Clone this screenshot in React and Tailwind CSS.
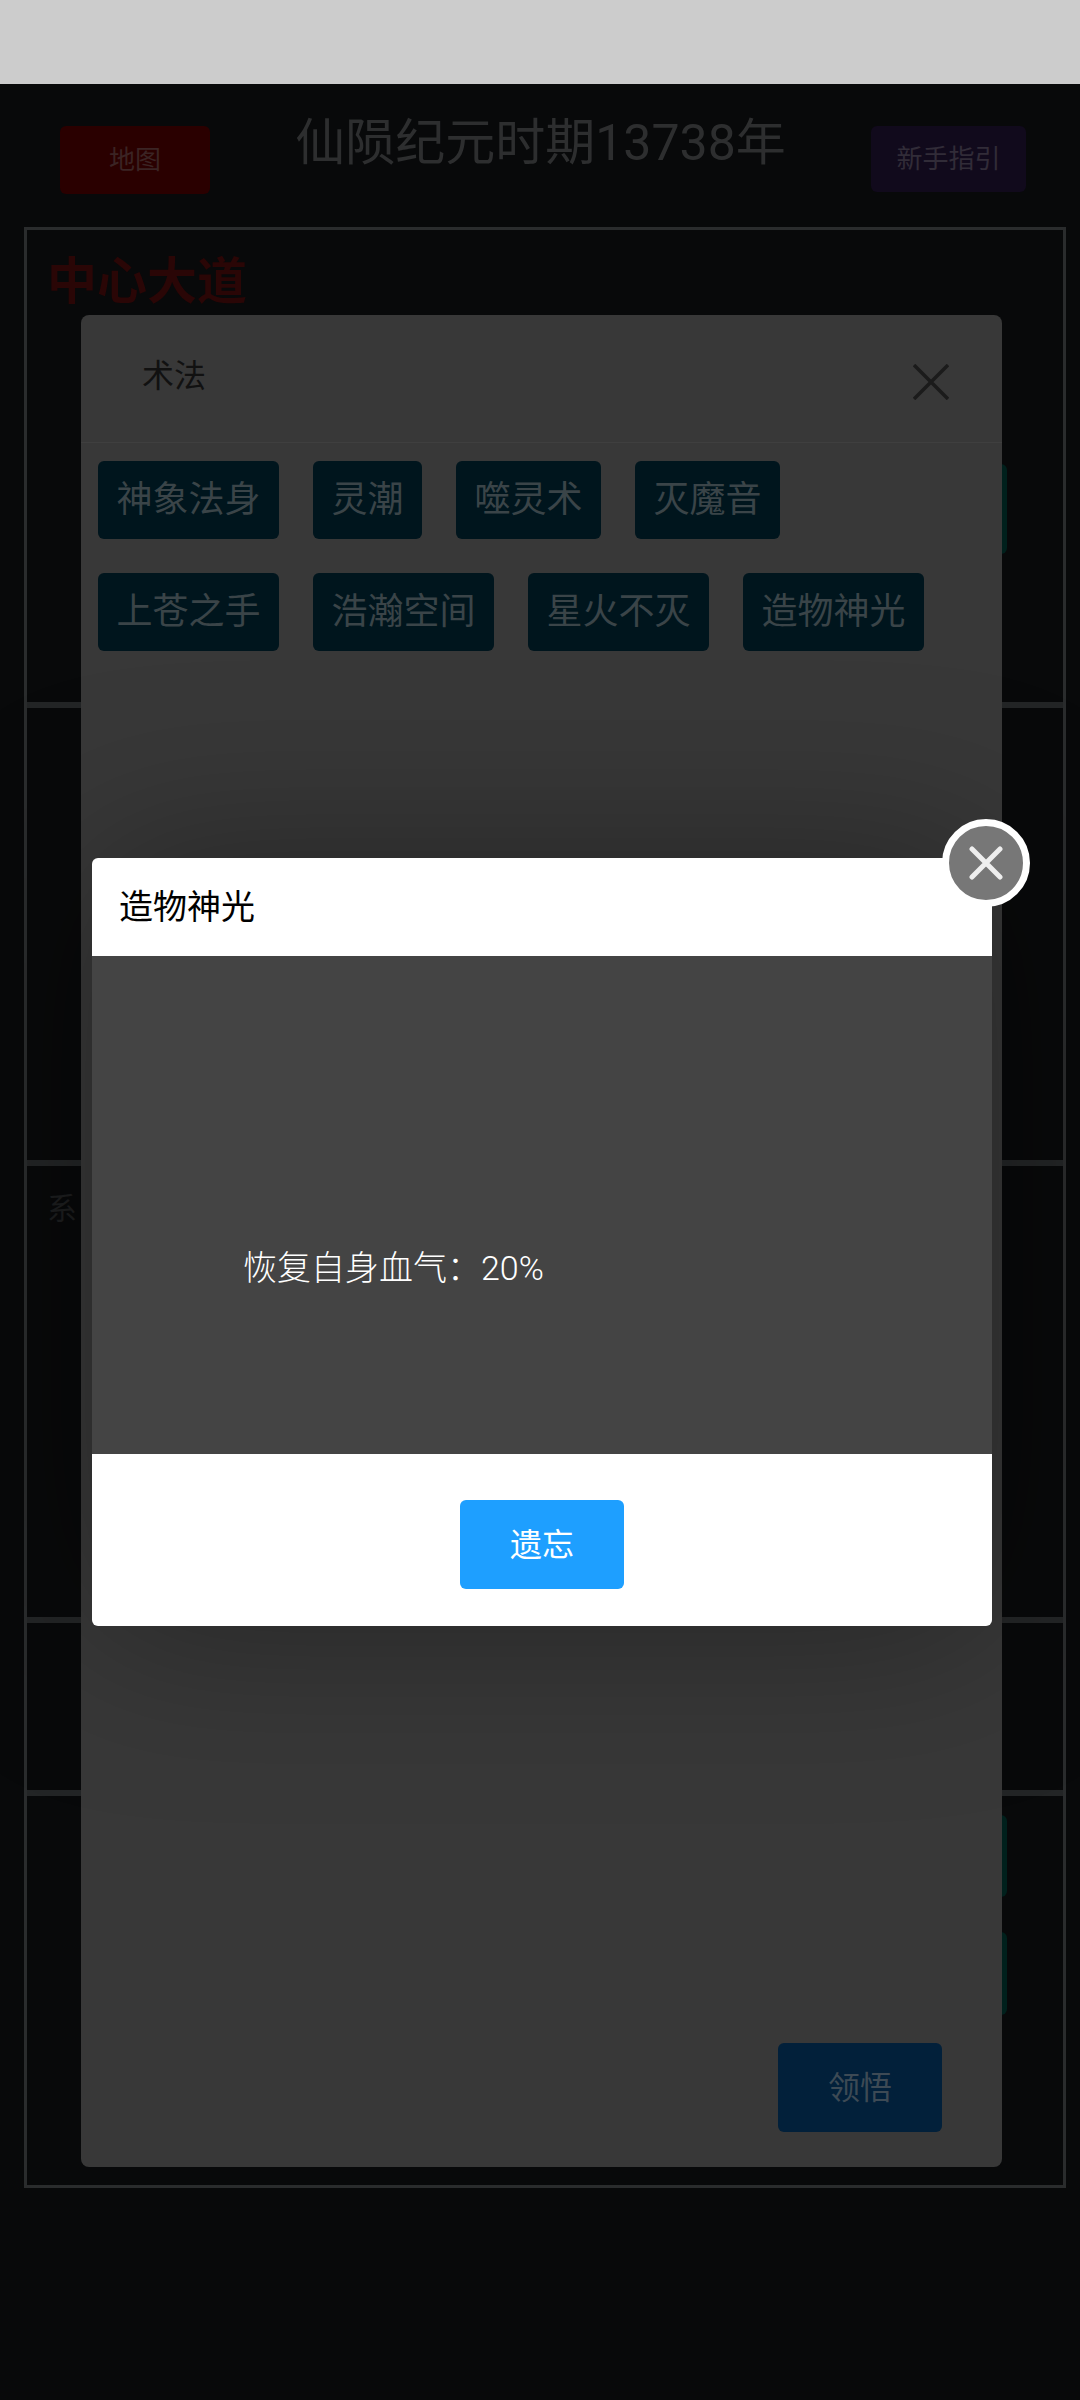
import React from "react";

const skills = [
  ["神象法身", "灵潮", "噬灵术", "灭魔音"],
  ["上苍之手", "浩瀚空间", "星火不灭", "造物神光"],
];

function Section({ className, children }) {
  return <section className={`border-b-[6px] border-[#232526] ${className}`}>{children}</section>;
}

// the page behind the dialogs, already dimmed
function GamePage() {
  return (
    <>
      <div className="h-[84px] bg-[#cccccc]" />

      <header className="flex h-[143px] items-start justify-between pl-[60px] pr-[54px] pt-[42px]">
        <button className="flex h-[68px] w-[150px] items-center justify-center rounded-md bg-[#2a0000] text-[26px] text-[#3b2424]">
          地图
        </button>
        <h1 className="-mt-[7px] text-[50px] leading-[48px] text-[#2d2e2f]">仙陨纪元时期13738年</h1>
        <button className="flex h-[66px] w-[155px] items-center justify-center rounded-md bg-[#110a1c] text-[26px] text-[#312c38]">
          新手指引
        </button>
      </header>

      <main className="ml-6 h-[1961px] w-[1042px] border-[3px] border-[#2a2c2d]">
        <Section className="h-[478px] px-5 pt-[22px]">
          <h2 className="text-[50px] font-bold leading-[60px] text-[#2a0606]">中心大道</h2>
          <div className="ml-[66px] mt-[152px] h-[90px] w-[894px] rounded-md bg-[#00201c]" />
        </Section>
        <Section className="h-[458px]" />
        <Section className="h-[457px] px-5 pt-[23px]">
          <h2 className="text-[30px] leading-[40px] text-[#1d1e1f]">系</h2>
        </Section>
        <Section className="h-[173px]" />
        <div className="flex flex-col gap-[35px] pl-[66px] pt-[19px]">
          <div className="h-[82px] w-[914px] rounded-md bg-[#00201c]" />
          <div className="h-[83px] w-[914px] rounded-md bg-[#00201c]" />
        </div>
      </main>
    </>
  );
}

function SkillDialog() {
  return (
    <div className="absolute left-[81px] top-[315px] flex h-[1852px] w-[921px] flex-col rounded-lg bg-[#383838]">
      <div className="flex h-[128px] items-start justify-between border-b border-[#3f3f3f] pl-[61px] pr-[53px]">
        <span className="mt-[39px] text-[32px] leading-[44px] text-[#111111]">术法</span>
        <svg className="mt-[49px]" width="36" height="36" viewBox="0 0 36 36" fill="none" stroke="#1b1b1b" strokeWidth="3.5">
          <path d="M1 1 L35 35 M35 1 L1 35" />
        </svg>
      </div>

      <div className="flex flex-col gap-[34px] pl-[17px] pt-[18px]">
        {skills.map((row, i) => (
          <div key={i} className="flex gap-[34px]">
            {row.map((name) => (
              <button
                key={name}
                className="flex h-[78px] items-center rounded-md bg-[#00151d] px-[18.5px] text-[36px] text-[#3a4448]"
              >
                {name}
              </button>
            ))}
          </div>
        ))}
      </div>

      <button className="mb-[35px] mr-[60px] mt-auto flex h-[89px] w-[164px] items-center justify-center self-end rounded-md bg-[#02203a] text-[32px] text-[#3d4a55]">
        领悟
      </button>
    </div>
  );
}

function DetailDialog() {
  return (
    <div className="absolute left-[92px] top-[858px] w-[900px] rounded-md bg-white shadow-[0_0_180px_rgba(0,0,0,0.35)]">
      <div className="flex h-[98px] items-center pl-[27px] text-[34px] text-black">造物神光</div>
      <div className="h-[498px] bg-[#444444] pl-[151px] pt-[288px] text-[34px] font-light leading-[48px] text-white">
        恢复自身血气：20%
      </div>
      <div className="flex h-[172px] justify-center pt-[46px]">
        <button className="flex h-[89px] w-[164px] items-center justify-center rounded-md bg-[#1e9fff] text-[32px] text-white">
          遗忘
        </button>
      </div>

      <button className="absolute -right-[38px] -top-[39px] flex h-[88px] w-[88px] items-center justify-center rounded-full border-[7px] border-white bg-[#777777]">
        <svg width="36" height="34" viewBox="0 0 36 34" fill="none" stroke="#eeeeee" strokeWidth="5" strokeLinecap="round">
          <path d="M4 3 L32 31 M32 3 L4 31" />
        </svg>
      </button>
    </div>
  );
}

export default function App() {
  return (
    <div className="relative h-[2400px] w-[1080px] overflow-hidden bg-[#08090a] font-['Roboto','Noto_Sans_CJK_SC',sans-serif]">
      <GamePage />
      <SkillDialog />
      <DetailDialog />
    </div>
  );
}
